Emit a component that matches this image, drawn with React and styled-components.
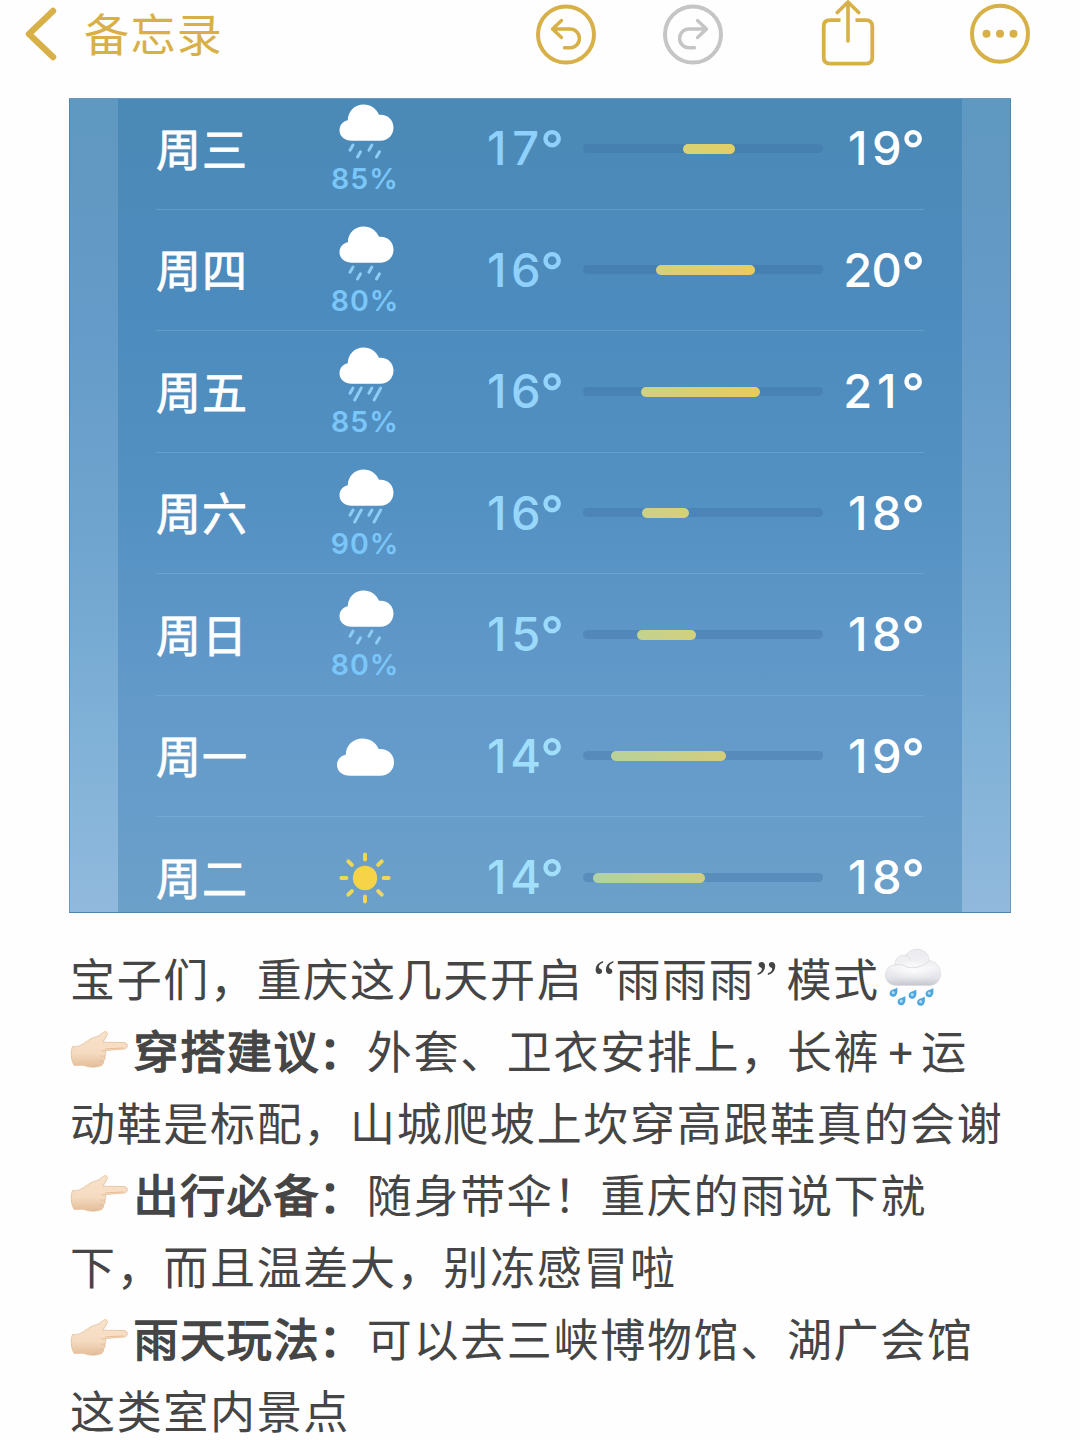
import React from "react"
import styled, { createGlobalStyle, css } from "styled-components"

const GOLD = "#d8b048"
const TRACK_WIDTH = 240

const GlobalStyle = createGlobalStyle`
  * {
    box-sizing: border-box;
  }

  body {
    margin: 0;
    background: #fefefe;
    font-family: "Inter", "Noto Sans CJK SC", sans-serif;
  }

  svg {
    display: block;
    flex: none;
    overflow: visible;
  }
`

const Page = styled.div`
  width: 1080px;
  height: 1440px;
  overflow: hidden;
  background: #fefefe;
`

/* Header */

const Header = styled.header`
  display: flex;
  align-items: flex-start;
  justify-content: space-between;
  height: 98px;
  padding: 0 50px 0 24px;
  color: ${GOLD};
`

const BackLink = styled.div`
  display: flex;
  align-items: center;
  gap: 26px;
  height: 68px;
`

const BackLabel = styled.span`
  font-family: "Noto Sans CJK SC", sans-serif;
  font-size: 45px;
  line-height: 68px;
  padding-bottom: 2px;
  letter-spacing: 1.4px;
`

const Actions = styled.div`
  display: flex;
  color: ${GOLD};
`

const Action = styled.div`
  margin-left: ${({ $gap }) => $gap || 0}px;
  color: ${({ $disabled }) => ($disabled ? "#c5c5c6" : "inherit")};
`

/* Forecast picture */

const Photo = styled.section`
  display: flex;
  justify-content: center;
  width: 942px;
  height: 815px;
  margin-left: 69px;
  overflow: hidden;
  border: 1px solid rgba(60, 110, 150, 0.45);
  background: linear-gradient(#5f98c0 0%, #659bc8 28%, #70a5cf 55%, #80b1d7 78%, #91b9dd 100%);
`

const Card = styled.div`
  width: 844px;
  height: 815px;
  padding: 0 38px;
  background: linear-gradient(#4b8ab6 0%, #4c8bbd 25%, #5491c3 50%, #639aca 75%, #6ba0c9 100%);
`

const Days = styled.div`
  margin-top: -11px;
`

const Day = styled.div`
  display: grid;
  grid-template-columns: 160px 98px 149px 260px 101px;
  align-items: center;
  height: 121.5px;
  border-bottom: 1px solid rgba(150, 200, 235, 0.28);
`

const DayName = styled.div`
  padding-bottom: 1px;
  font-family: "Noto Sans CJK SC", sans-serif;
  font-size: 45px;
  line-height: 60px;
  letter-spacing: 1px;
  color: #fff;
  -webkit-text-stroke: 0.8px #fff;
`

const Weather = styled.div`
  display: flex;
  flex-direction: column;
  align-items: center;
  padding-top: 2px;
`

const Chance = styled.div`
  margin-top: 3px;
  font-size: 28.5px;
  font-weight: 600;
  line-height: 30px;
  letter-spacing: 1px;
  color: #7bc6f8;
`

const Temperature = styled.div`
  display: flex;
  align-items: flex-start;
  justify-content: flex-end;
  height: 60px;
  font-size: 47px;
  font-weight: 500;
  line-height: 60px;
  white-space: nowrap;
  ${({ $low }) =>
    $low
      ? css`
          color: ${$low};
        `
      : css`
          color: #fff;
        `}
`

const Digit = styled.span`
  display: flex;
  justify-content: center;
  width: 29px;
`

const Degree = styled.span`
  margin: 22px 1px 0 0;
  font-size: 52px;
  line-height: 20px;
  letter-spacing: -2px;
`

const Track = styled.div`
  width: ${TRACK_WIDTH}px;
  height: 9px;
  margin-left: 20px;
  border-radius: 5px;
  background: rgba(60, 110, 160, 0.35);
`

const Range = styled.div`
  height: 10px;
  border-radius: 5px;
`

/* Note text */

const Note = styled.article`
  padding: 29px 0 0 70px;
  font-family: "Noto Sans CJK SC", sans-serif;
  font-size: 45px;
  letter-spacing: 1.67px;
  color: #454545;
`

const Line = styled.div`
  display: flex;
  align-items: center;
  height: 72px;
  line-height: 60px;
  white-space: nowrap;
`

const Strong = styled.strong`
  font-weight: 400;
  -webkit-text-stroke: 1.5px #454545;
`

const Colon = styled.span`
  margin: 0 1.5px 0 -1.5px;
`

const Quote = styled.span`
  width: ${({ $width }) => $width}px;
  font-family: "Liberation Serif", serif;
  font-size: 50px;
  letter-spacing: 0;
  text-align: ${({ $align }) => $align};
`

const Plus = styled.span`
  width: 41px;
  font-family: "Inter", sans-serif;
  letter-spacing: 0;
  text-align: center;
`

const EmojiSlot = styled.span`
  width: ${({ $width }) => $width}px;
`

const BackIcon = () => (
  <svg width="34" height="68" viewBox="24 0 34 68" fill="none">
    <path d="M53 11L29 34L53 57" stroke={GOLD} strokeWidth="6.4" strokeLinecap="round" strokeLinejoin="round" />
  </svg>
)

const UndoIcon = () => (
  <svg width="60" height="68" viewBox="0 0 60 68" fill="none" stroke="currentColor" strokeLinecap="round" strokeLinejoin="round">
    <circle cx="30" cy="34.5" r="28" strokeWidth="4" />
    <path d="M25.5 20.5L16.5 29L25.5 37.5M17 29H34A9.4 9.4 0 0 1 34 47.8H28.5" strokeWidth="3.4" />
  </svg>
)

const RedoIcon = () => (
  <svg width="60" height="68" viewBox="0 0 60 68" fill="none" stroke="currentColor" strokeLinecap="round" strokeLinejoin="round">
    <circle cx="30" cy="34.5" r="28" strokeWidth="4" />
    <path d="M34.5 20.5L43.5 29L34.5 37.5M43 29H26A9.4 9.4 0 0 0 26 47.8H31.5" strokeWidth="3.4" />
  </svg>
)

const ShareIcon = () => (
  <svg width="54" height="68" viewBox="820.5 0 54 68" fill="none" stroke="currentColor" strokeLinejoin="round">
    <path d="M840 20.2H829.5Q823.2 20.2 823.2 26.5V57.3Q823.2 63.6 829.5 63.6H865.5Q871.8 63.6 871.8 57.3V26.5Q871.8 20.2 865.5 20.2H855" strokeWidth="3.8" />
    <path d="M847.5 3V41M836.8 12.5L847.5 2L858.2 12.5" strokeWidth="3.6" strokeLinecap="round" />
  </svg>
)

const MoreIcon = () => (
  <svg width="60" height="68" viewBox="0 0 60 68">
    <circle cx="30" cy="33.7" r="28" fill="none" stroke="currentColor" strokeWidth="4" />
    <g fill="currentColor">
      <circle cx="16.5" cy="33.7" r="4" />
      <circle cx="30" cy="33.7" r="4" />
      <circle cx="43.5" cy="33.7" r="4" />
    </g>
  </svg>
)

const CLOUD = "M12.3 36.7C5.2 36.7 0 32.4 0 26.2C0 21 3.4 17.2 8.3 16.2C8.4 7.2 15.3 0.5 24.1 0.5C31 0.5 36.8 4.4 39.5 10.7C48 10 54 15.6 54 23.5C54 31.2 48.5 36.7 41 36.7Z"

const DROPS = {
  rain: "M14.5 41.8L11.5 47M22 48.6L19 53.8M33.4 41.8L30.4 47M41 48.6L38 53.8",
  heavy: "M14.5 41.8L11.5 47M22.8 41.8L16.2 53.8M33.4 41.8L30.4 47M42.2 41.8L35.6 53.8",
}

const RainIcon = ({ kind }) => (
  <svg width="54" height="57" viewBox="2 0 54 57">
    <path d={CLOUD} transform="translate(3.5 0)" fill="#fff" />
    <path d={DROPS[kind]} transform="translate(2.5 -0.8)" fill="none" stroke="#8dcdf5" strokeWidth="3" strokeLinecap="round" />
  </svg>
)

const CloudIcon = () => (
  <svg width="57" height="38" viewBox="0 0 54 37" preserveAspectRatio="none">
    <path d={CLOUD} fill="#fff" />
  </svg>
)

const SunIcon = () => (
  <svg width="54" height="54" viewBox="-27 -27 54 54">
    <circle r="12.2" fill="#f7d348" />
    {[0, 45, 90, 135, 180, 225, 270, 315].map(angle => (
      <path key={angle} d="M0 -18.6V-23.6" transform={`rotate(${angle})`} stroke="#efd757" strokeWidth="4" strokeLinecap="round" />
    ))}
  </svg>
)

const Hand = () => (
  <EmojiSlot $width={63.5} role="img" aria-label="👉🏻">
    <svg width="60" height="44" viewBox="1 0 62 44">
      <defs>
        <linearGradient id="skin" x1="0" y1="0" x2="0" y2="1">
          <stop offset="0" stopColor="#f8e2cb" />
          <stop offset="0.6" stopColor="#f5dbc0" />
          <stop offset="1" stopColor="#e3bd99" />
        </linearGradient>
      </defs>
      <path
        d="M3.6 18.5C8 18.8 12 17.6 15.5 15.2C19.5 12.2 23 9.5 28 8.4C32 7.4 33.5 4.5 36.5 3.2C39 2.4 40.6 4.6 39.2 7C37.8 9.8 36.4 11.6 35 13.9L57 14.3C61.4 14.6 61.2 20.6 57.2 21L37.5 22.6C38.3 24.8 38 26.6 37 28C37.8 30.5 37 32.4 35.7 33.3C35.8 36.6 34 38.6 31 38.8C26.5 40.4 20.5 40 16 38.1C12 37 8.5 38.5 5.2 37.8C2 33 1.4 23.5 3.6 18.5Z"
        fill="url(#skin)"
        stroke="#e2bd98"
        strokeWidth="0.8"
      />
      <path d="M37.4 22.6C35.6 23.6 34.6 23.4 33.4 22.6M36.8 28C35.2 28.9 34 28.8 32.6 28M35.6 33.2C34 34 33 33.8 31.6 33" fill="none" stroke="#e0bb96" strokeWidth="0.8" strokeLinecap="round" />
      <path d="M38 20.9L56 19.9" stroke="#e6bd97" strokeWidth="1" strokeLinecap="round" />
    </svg>
  </EmojiSlot>
)

const DROP_POINTS = [[8.5, 43], [16.5, 51.5], [27.5, 45], [36, 52], [44.5, 43.5]]

const RainCloudEmoji = () => (
  <EmojiSlot $width={60} role="img" aria-label="🌧️">
    <svg width="60" height="60" viewBox="-5 0 60 60">
      <defs>
        <linearGradient id="puff" x1="0" y1="0" x2="0" y2="1">
          <stop offset="0" stopColor="#ececf0" />
          <stop offset="0.5" stopColor="#f2f2f5" />
          <stop offset="0.8" stopColor="#e2e2e8" />
          <stop offset="1" stopColor="#c5c5ce" />
        </linearGradient>
        <radialGradient id="glow" cx="0.5" cy="0.45" r="0.5">
          <stop offset="0" stopColor="#fff" stopOpacity="0.85" />
          <stop offset="1" stopColor="#fff" stopOpacity="0" />
        </radialGradient>
      </defs>
      <path d="M12 37.5C4.5 37.5 0.5 33 0.5 27C0.5 21.2 4.5 17.4 10 16.6C10.2 10 15.2 6.2 20.8 7.3C23.6 3.2 27.6 1.3 32.2 1.3C39 1.3 44 6.2 44.3 12.5C51.5 14 55.5 19 55.5 25.5C55.5 32.5 51 37.5 44.5 37.5Z" fill="url(#puff)" stroke="#dadade" strokeWidth="0.7" />
      <ellipse cx="29" cy="23" rx="25" ry="10" fill="url(#glow)" />
      <path d="M10.5 17.2C13.5 15.8 17.5 16 20.5 18.5C26 21 38 20 43.8 13M21 7.5C23 8 24.5 9 25 11" fill="none" stroke="#d9d9df" strokeWidth="0.9" strokeLinecap="round" />
      {DROP_POINTS.map(([x, y]) => (
        <g key={x} transform={`translate(${x} ${y}) rotate(24)`}>
          <path d="M2 -4.8C3.6 -1.5 4.6 0 4.3 2A3.6 3.6 0 0 1 -2.9 2C-3 -0.3 0.2 -1.8 2 -4.8Z" fill="#4ba6df" />
          <circle cx="0.4" cy="1.6" r="1.6" fill="#a9dcf7" />
        </g>
      ))}
    </svg>
  </EmojiSlot>
)

// from and to are pixels along the track
const DAYS = [
  { name: "周三", kind: "rain", chance: "85%", low: 17, high: 19, from: 100, to: 152, bar: ["#d9d275", "#e2cf66"], tint: "#8fd0fc" },
  { name: "周四", kind: "rain", chance: "80%", low: 16, high: 20, from: 73, to: 172, bar: ["#d2d17d", "#e8cd5e"], tint: "#8fd1fc" },
  { name: "周五", kind: "heavy", chance: "85%", low: 16, high: 21, from: 58, to: 177, bar: ["#cfd182", "#e8cb5c"], tint: "#93d3fc" },
  { name: "周六", kind: "heavy", chance: "90%", low: 16, high: 18, from: 59, to: 106, bar: ["#cad287", "#d4d079"], tint: "#98d7fc" },
  { name: "周日", kind: "rain", chance: "80%", low: 15, high: 18, from: 54, to: 113, bar: ["#c3d28f", "#d3d07d"], tint: "#9bdafb" },
  { name: "周一", kind: "cloud", low: 14, high: 19, from: 28, to: 143, bar: ["#b7d29b", "#d4cd7d"], tint: "#a0defb" },
  { name: "周二", kind: "sun", low: 14, high: 18, from: 10, to: 122, bar: ["#aed3a6", "#cfcd82"], tint: "#a2dffb" },
]

const WeatherIcon = ({ kind }) => {
  if (kind === "cloud") return <CloudIcon />
  if (kind === "sun") return <SunIcon />
  return <RainIcon kind={kind} />
}

const Degrees = ({ value, tint }) => (
  <Temperature $low={tint}>
    {String(value).split("").map((digit, i) => (
      <Digit key={i}>{digit}</Digit>
    ))}
    <Degree>°</Degree>
  </Temperature>
)

const Forecast = () => (
  <Photo>
    <Card>
      <Days>
        {DAYS.map(({ name, kind, chance, low, high, from, to, bar, tint }) => (
          <Day key={name}>
            <DayName>{name}</DayName>
            <Weather>
              <WeatherIcon kind={kind} />
              {chance && <Chance>{chance}</Chance>}
            </Weather>
            <Degrees value={low} tint={tint} />
            <Track>
              <Range
                style={{
                  width: to - from,
                  marginLeft: from,
                  background: `linear-gradient(90deg, ${bar[0]}, ${bar[1]})`,
                }}
              />
            </Track>
            <Degrees value={high} />
          </Day>
        ))}
      </Days>
    </Card>
  </Photo>
)

const App = () => (
  <Page>
    <GlobalStyle />
    <Header>
      <BackLink>
        <BackIcon />
        <BackLabel>备忘录</BackLabel>
      </BackLink>
      <Actions>
        <Action><UndoIcon /></Action>
        <Action $gap={66.5} $disabled><RedoIcon /></Action>
        <Action $gap={98}><ShareIcon /></Action>
        <Action $gap={95.5}><MoreIcon /></Action>
      </Actions>
    </Header>
    <Forecast />
    <Note>
      <Line>
        宝子们，重庆这几天开启
        <Quote $width={32} $align="right">“</Quote>
        雨雨雨
        <Quote $width={31} $align="left">”</Quote>
        模式
        <RainCloudEmoji />
      </Line>
      <Line>
        <Hand />
        <Strong>穿搭建议<Colon>：</Colon></Strong>
        外套、卫衣安排上，长裤
        <Plus>+</Plus>
        运
      </Line>
      <Line>动鞋是标配，山城爬坡上坎穿高跟鞋真的会谢</Line>
      <Line>
        <Hand />
        <Strong>出行必备<Colon>：</Colon></Strong>
        随身带伞！重庆的雨说下就
      </Line>
      <Line>下，而且温差大，别冻感冒啦</Line>
      <Line>
        <Hand />
        <Strong>雨天玩法<Colon>：</Colon></Strong>
        可以去三峡博物馆、湖广会馆
      </Line>
      <Line>这类室内景点</Line>
    </Note>
  </Page>
)

export default App
